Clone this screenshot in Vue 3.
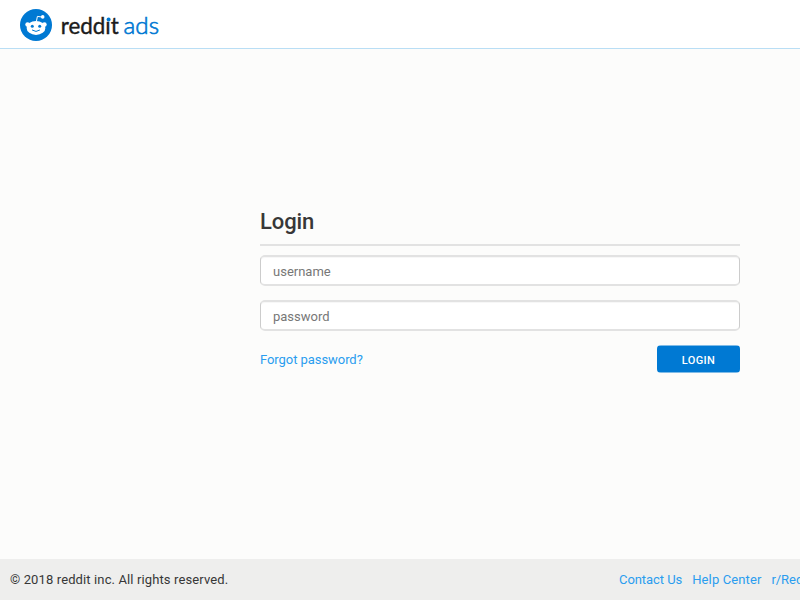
<script setup>
import { ref } from 'vue'

const username = ref('')
const password = ref('')
const links = ['Contact Us', 'Help Center', 'r/RedditAds']
</script>

<template>
  <div class="page">
    <header class="header">
      <svg class="mark" viewBox="0 0 32 32" aria-hidden="true">
        <circle cx="16" cy="16" r="16" fill="#0079d3" />
        <path d="M16.4 12.5 17.4 7.4 21.7 8" fill="none" stroke="#fff" stroke-width="1" stroke-linejoin="round" />
        <circle cx="22.7" cy="7.9" r="1.8" fill="#fff" />
        <circle cx="7.6" cy="15.6" r="2.3" fill="#fff" />
        <circle cx="24.4" cy="15.6" r="2.3" fill="#fff" />
        <ellipse cx="16" cy="18.9" rx="9.4" ry="7" fill="#fff" />
        <circle cx="12.3" cy="17.3" r="1.5" fill="#0079d3" />
        <circle cx="19.7" cy="17.3" r="1.5" fill="#0079d3" />
        <path d="M12.4 21.2Q16 23.9 19.6 21.2" fill="none" stroke="#0079d3" stroke-width="1" stroke-linecap="round" />
      </svg>
      <svg class="wordmark" viewBox="0 0 102 32" role="img" aria-label="reddit ads">
        <text x="-0.3" y="24.6" textLength="58" lengthAdjust="spacingAndGlyphs" class="brand">redd&#305;t</text>
        <circle cx="47.6" cy="10.4" r="2" fill="#0079d3" />
        <text x="62.6" y="24.6" textLength="35.5" lengthAdjust="spacingAndGlyphs" class="product">ads</text>
      </svg>
    </header>

    <main class="main">
      <form class="login" @submit.prevent>
        <h1 class="title">Login</h1>
        <input v-model="username" class="field" type="text" placeholder="username" />
        <input v-model="password" class="field" type="password" placeholder="password" />
        <div class="actions">
          <a class="forgot">Forgot password?</a>
          <button class="submit" type="submit">LOGIN</button>
        </div>
      </form>
    </main>

    <footer class="footer">
      <span class="copyright">© 2018 reddit inc. All rights reserved.</span>
      <nav class="links">
        <a v-for="link in links" :key="link">{{ link }}</a>
      </nav>
    </footer>
  </div>
</template>

<style>
body {
  margin: 0;
}
</style>

<style scoped>
.page {
  display: flex;
  flex-direction: column;
  height: 100vh;
  overflow: hidden;
  background: #fcfcfb;
  color: #373737;
  font-family: Roboto, "Liberation Sans", sans-serif;
  font-size: 13px;
}
.header {
  display: flex;
  box-sizing: border-box;
  flex: none;
  height: 49px;
  padding: 9px 20px 7px;
  border-bottom: 1px solid #b9def5;
  background: #fff;
}
.mark {
  width: 32px;
  height: 32px;
}
.wordmark {
  width: 102px;
  height: 32px;
  margin-left: 9px;
  overflow: visible;
}
.brand,
.product {
  font-family: Lato, sans-serif;
  font-size: 24px;
}
.brand {
  fill: #1c1c1c;
  stroke: #1c1c1c;
  stroke-width: 0.4px;
}
.product {
  fill: #0079d3;
  stroke: #0079d3;
  stroke-width: 0.65px;
  font-weight: 300;
}
.main {
  flex: 1;
  padding: 156px 60px 0 260px;
}
.login {
  display: flex;
  flex-direction: column;
}
.title {
  box-sizing: border-box;
  height: 41px;
  margin: 0 0 9px;
  padding-top: 4px;
  border-bottom: 2px solid #e2e2e2;
  font-size: 22px;
  font-weight: 500;
  line-height: 26px;
  letter-spacing: -0.1px;
}
.field {
  box-sizing: border-box;
  width: 100%;
  height: 31px;
  margin: 0 0 14px;
  padding: 1px 12px 0;
  border: solid #e2e2e2;
  border-width: 2px 1px;
  border-left-color: #ccc;
  border-right-color: #ccc;
  border-radius: 5px;
  background: #fff;
  box-shadow: inset 0 1px 1px rgba(0, 0, 0, 0.035);
  color: #373737;
  font: inherit;
  letter-spacing: 0;
  outline: none;
}
.field::placeholder {
  color: #777;
  opacity: 1;
}
.actions {
  display: flex;
  align-items: center;
  justify-content: space-between;
}
.forgot,
.links a {
  color: #2a9def;
  letter-spacing: -0.06px;
}
.links a:nth-child(2) {
  letter-spacing: 0.12px;
}
.submit {
  width: 83px;
  height: 28px;
  padding: 2px 0 0;
  border: 0;
  border-radius: 4px;
  background: linear-gradient(#7fbbe7 1px, #0079d3 1px, #0079d3 27px, #7fbbe7 27px);
  color: #fff;
  font: 500 11px Roboto, "Liberation Sans", sans-serif;
  letter-spacing: 0.4px;
}
.footer {
  display: flex;
  flex: none;
  align-items: center;
  height: 41px;
  padding-left: 10px;
  background: #eeeeed;
}
.copyright {
  width: 609px;
  flex: none;
  letter-spacing: 0.12px;
}
.links {
  display: flex;
  flex: none;
  gap: 10px;
  white-space: nowrap;
}
</style>
